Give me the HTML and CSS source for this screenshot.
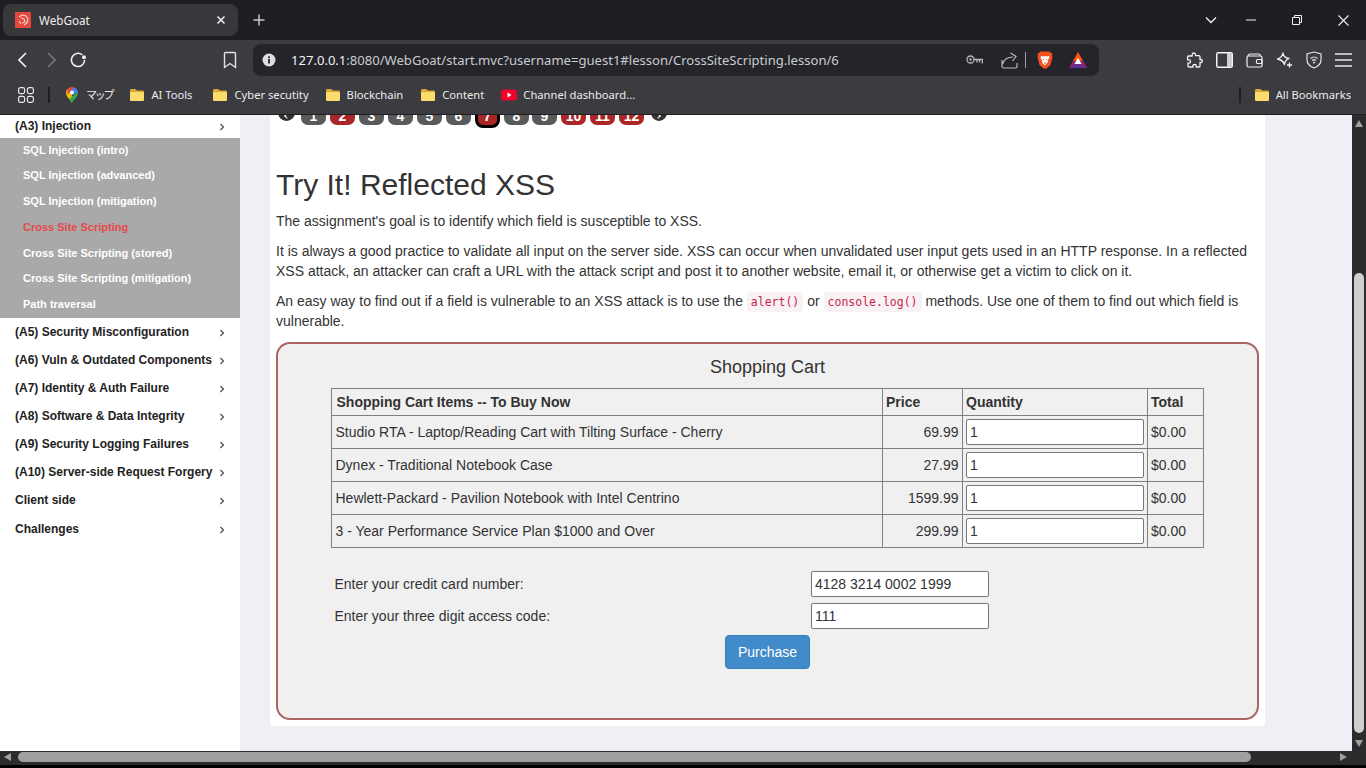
FILE: index.html
```html
<!DOCTYPE html>
<html lang="en">
<head>
<meta charset="utf-8">
<title>WebGoat</title>
<link rel="stylesheet" href="styles.css">
</head>
<body>
<svg class="defs" width="0" height="0" aria-hidden="true">
  <defs>
    <symbol id="folder" viewBox="0 0 16 16">
      <path d="M1 3.5C1 2.7 1.6 2 2.4 2h3.4c.4 0 .7.1 1 .4L8 3.5h5.6c.8 0 1.4.7 1.4 1.5v7.5c0 .8-.6 1.5-1.4 1.5H2.4C1.6 14 1 13.3 1 12.5z" fill="#d9a935"/>
      <path d="M1 6.2C1 5.5 1.6 5 2.4 5h11.2c.8 0 1.4.5 1.4 1.2v6.3c0 .8-.6 1.5-1.4 1.5H2.4C1.6 14 1 13.3 1 12.5z" fill="#fbdc6c"/>
    </symbol>
    <symbol id="chev" viewBox="0 0 6 8">
      <path d="M1.5 1l3 3-3 3" fill="none" stroke="#444" stroke-width="1.1"/>
    </symbol>
  </defs>
</svg>

<header class="tabbar">
  <div class="tab">
    <svg class="favicon" width="16" height="16" viewBox="0 0 16 16"><rect width="16" height="16" rx="1" fill="#e4483c"/><path d="M4 5l3-2 4 1 2 3-1 4-3 2M6 6l3 1 1 3-3 1M4 9l2 3" fill="none" stroke="#fbd5cf" stroke-width="1.1"/></svg>
    <span class="tab-title">WebGoat</span>
    <svg class="tab-close" width="10" height="10" viewBox="0 0 10 10"><path d="M1.5 1.5l7 7M8.5 1.5l-7 7" stroke="#f0f0f0" stroke-width="1.5"/></svg>
  </div>
  <svg class="new-tab" width="12" height="12" viewBox="0 0 12 12"><path d="M6 .5v11M.5 6h11" stroke="#c8c8cc" stroke-width="1.5"/></svg>
  <div class="window-controls">
    <svg width="12" height="8" viewBox="0 0 12 8"><path d="M1 1.5l5 5 5-5" fill="none" stroke="#f2f2f2" stroke-width="1.3"/></svg>
    <svg class="win-min" width="10" height="2" viewBox="0 0 10 2"><path d="M0 1h10" stroke="#f2f2f2"/></svg>
    <svg class="win-res" width="10" height="10" viewBox="0 0 10 10"><path d="M.5 2.5h7v7h-7zM2.5 2.5v-2h7v7h-2" fill="none" stroke="#f2f2f2"/></svg>
    <svg class="win-close" width="11" height="11" viewBox="0 0 11 11"><path d="M.5.5l10 10M10.5.5l-10 10" stroke="#f2f2f2" stroke-width="1.1"/></svg>
  </div>
</header>

<nav class="toolbar">
  <div class="nav-buttons">
    <svg width="12" height="18" viewBox="0 0 12 18"><path d="M10 2L3 9l7 7" fill="none" stroke="#f0f0f0" stroke-width="1.7"/></svg>
    <svg class="nav-fwd" width="12" height="18" viewBox="0 0 12 18"><path d="M2 2l7 7-7 7" fill="none" stroke="#77777b" stroke-width="1.7"/></svg>
    <svg class="nav-reload" width="18" height="18" viewBox="0 0 18 18"><path d="M15.6 9a6.6 6.6 0 1 1-2.2-5" fill="none" stroke="#f0f0f0" stroke-width="1.6"/><circle cx="15" cy="6.2" r="2" fill="#f0f0f0"/></svg>
  </div>
  <svg class="bookmark-btn" width="14" height="18" viewBox="0 0 14 18"><path d="M1.5 2.5c0-.6.4-1 1-1h9c.6 0 1 .4 1 1v14L7 12.5l-5.500 4z" fill="none" stroke="#e4e4e4" stroke-width="1.4"/></svg>
  <div class="address">
    <svg class="addr-info" width="14" height="14" viewBox="0 0 14 14"><circle cx="7" cy="7" r="6.500" fill="#dedee0"/><rect x="6.100" y="6" width="1.800" height="4.500" fill="#24242a"/><rect x="6.100" y="3.300" width="1.800" height="1.800" fill="#24242a"/></svg>
    <span class="url"><span class="url-host">127.0.0.1</span>:8080/WebGoat/start.mvc?username=guest1#lesson/CrossSiteScripting.lesson/6</span>
    <div class="addr-actions">
      <svg width="17" height="10" viewBox="0 0 17 10"><circle cx="4.500" cy="4.500" r="3.500" fill="none" stroke="#b8b8bc" stroke-width="1.300"/><circle cx="4.500" cy="4.500" r="1.200" fill="#b8b8bc"/><path d="M8 4.500h8.300v4M13.500 4.500v3M11 4.500v3" fill="none" stroke="#b8b8bc" stroke-width="1.300"/></svg>
      <svg class="act-share" width="17" height="17" viewBox="0 0 17 17"><path d="M1 8v6.500c0 .8.500 1.500 1.500 1.500h12c1 0 1.500-.7 1.500-1.500V11M1.500 12C3 7.500 6.500 5 12 5M9.500 1L15 4.500 11.500 9" fill="none" stroke="#b8b8bc" stroke-width="1.200"/></svg>
      <span class="act-sep"></span>
      <svg class="act-brave" width="16" height="18" viewBox="0 0 16 18"><path d="M3.500 0.500h9l1.500 1.500 1.500.5-.5 2 .5 1.500-2 8-4 3.500h-3l-4-3.500-2-8L1 4.500l-.5-2L2 2z" fill="#f1521f"/><path d="M4 5l2.500.5L8 5l1.500.5L12 5l.5 1.500-2 3 .5 1.500-1.500 1.500L8 14.500 6.500 13 5 11.500l.5-1.500-2-3z" fill="#fff"/><path d="M6 8l1 .7M10 8l-1 .7M7 12h2" stroke="#f1521f"/></svg>
      <svg class="act-bat" width="18" height="16" viewBox="0 0 18 16"><path d="M9 0l9 16H0z" fill="#662d91"/><path d="M9 0l5 9H4z" fill="#ff5000"/><path d="M0 16l4-7 2 3z" fill="#9e1f63"/><path d="M18 16l-4-7-2 3z" fill="#9e1f63"/><path d="M9 5.500l3.500 6.500h-7z" fill="#fff"/></svg>
    </div>
  </div>
  <div class="ext-icons">
    <svg width="17" height="17" viewBox="0 0 17 17"><path d="M6.500 1.500c1-1 3-.5 3 1.200v1h3.500c.6 0 1 .4 1 1v2.800h1c1.600 0 2 2.700 0 3h-1V14c0 .6-.4 1-1 1h-2.700v-1c0-2-3.400-2-3.400 0v1H3c-.6 0-1-.4-1-1v-2.800h1c2 0 2-3.400 0-3.400H1.600V5c0-.6.400-1 1-1h3.400z" fill="none" stroke="#f4f4f4" stroke-width="1.300"/></svg>
    <svg width="17" height="16" viewBox="0 0 17 16"><rect x=".75" y=".75" width="15.500" height="14.500" rx="1.500" fill="none" stroke="#f4f4f4" stroke-width="1.500"/><rect x="11" y="1" width="5" height="14" fill="#cfcfcf"/></svg>
    <svg width="17" height="15" viewBox="0 0 17 15"><path d="M2 3.500V3c0-1 1-2 2-2h9c1 0 1.500.7 1.500 2M1 4.500C1 3.500 1.700 3 2.500 3h12c1 0 1.500.7 1.500 1.500v8c0 1-.7 1.500-1.500 1.500h-12C1.700 14 1 13.500 1 12.500z" fill="none" stroke="#f4f4f4" stroke-width="1.200"/><rect x="10.500" y="6.500" width="5.500" height="4" rx="1" fill="none" stroke="#f4f4f4" stroke-width="1.200"/></svg>
    <svg width="17" height="17" viewBox="0 0 17 17"><path d="M7 1c.3 3.400 2 5 6 5.500-3 1.200-4.200 2.600-4.500 6-1-3-2.700-4.600-7-5.500C5 5.800 6.500 4.300 7 1z" fill="none" stroke="#f4f4f4" stroke-width="1.300" stroke-linejoin="round"/><path d="M13.500 10.500v5M11 13h5" stroke="#f4f4f4" stroke-width="1.300"/></svg>
    <svg width="16" height="18" viewBox="0 0 16 18"><path d="M8 1l7 2v6c0 4-3 6.500-7 8-4-1.500-7-4-7-8V3z" fill="none" stroke="#e4e4e4" stroke-width="1.200"/><path d="M4.500 7.500c2-1.800 5-1.800 7 0M6 9.500c1.200-1 2.800-1 4 0" fill="none" stroke="#e4e4e4" stroke-width="1.200"/><circle cx="8" cy="11.500" r="1" fill="#e4e4e4"/></svg>
    <svg width="17" height="14" viewBox="0 0 17 14"><path d="M0 1h17M0 7h17M0 13h17" stroke="#e8e8e8" stroke-width="1.500"/></svg>
  </div>
</nav>

<div class="bookmarks">
  <svg class="bm-grid" width="16" height="16" viewBox="0 0 16 16"><g fill="none" stroke="#e8e8e8" stroke-width="1.200"><rect x=".6" y=".6" width="6" height="6" rx="1.800"/><rect x="9.400" y=".6" width="6" height="6" rx="1.800"/><rect x=".6" y="9.400" width="6" height="6" rx="1.800"/><rect x="9.400" y="9.400" width="6" height="6" rx="1.800"/></g></svg>
  <span class="bm-sep"></span>
  <svg class="bm-maps" width="12" height="16" viewBox="0 0 12 16"><path d="M6 16C4.500 12.500 0 10 0 5.500 0 4 .6 3 1.500 2L6 8z" fill="#fbbc04"/><path d="M1.500 2C2.500.8 4 0 6 0c1 0 1.800.2 2.500.6L1.500 7.500z" fill="#ea4335"/><path d="M8.500.6c1.500.8 3 2.500 3.500 4.400L6 8 3 5z" fill="#4285f4"/><path d="M12 5.500C12 10 7.500 12.500 6 16L3.600 11.500 12 4.500z" fill="#34a853"/><circle cx="6" cy="5.500" r="2" fill="#fff"/></svg>
  <span class="bm-label bm-gap-maps">マップ</span>
  <span class="bm"><svg class="bm-folder" width="16" height="16"><use href="#folder"/></svg><span class="bm-label">AI Tools</span></span>
  <span class="bm bm-cyber"><svg class="bm-folder" width="16" height="16"><use href="#folder"/></svg><span class="bm-label">Cyber secutity</span></span>
  <span class="bm bm-chain"><svg class="bm-folder" width="16" height="16"><use href="#folder"/></svg><span class="bm-label">Blockchain</span></span>
  <span class="bm"><svg class="bm-folder" width="16" height="16"><use href="#folder"/></svg><span class="bm-label">Content</span></span>
  <span class="bm"><svg class="bm-yt" width="16" height="12" viewBox="0 0 16 12"><rect width="16" height="11" y=".5" rx="3" fill="#f4002c"/><path d="M6.500 3.500v5l4-2.500z" fill="#fff"/></svg><span class="bm-label">Channel dashboard...</span></span>
  <span class="bm-right">
    <span class="bm-sep"></span>
    <span class="bm bm-all"><svg class="bm-folder" width="16" height="16"><use href="#folder"/></svg><span class="bm-label">All Bookmarks</span></span>
  </span>
</div>

<div class="viewport">
  <div class="page-row">
    <div class="page">
      <aside class="sidebar">
        <a class="menu-item menu-first">(A3) Injection<svg class="chev" width="6" height="8"><use href="#chev"/></svg></a>
        <div class="submenu">
          <a class="sub-item">SQL Injection (intro)</a>
          <a class="sub-item sub-tight">SQL Injection (advanced)</a>
          <a class="sub-item">SQL Injection (mitigation)</a>
          <a class="sub-item sub-active">Cross Site Scripting</a>
          <a class="sub-item">Cross Site Scripting (stored)</a>
          <a class="sub-item">Cross Site Scripting (mitigation)</a>
          <a class="sub-item">Path traversal</a>
        </div>
        <a class="menu-item">(A5) Security Misconfiguration<svg class="chev" width="6" height="8"><use href="#chev"/></svg></a>
        <a class="menu-item">(A6) Vuln &amp; Outdated Components<svg class="chev" width="6" height="8"><use href="#chev"/></svg></a>
        <a class="menu-item">(A7) Identity &amp; Auth Failure<svg class="chev" width="6" height="8"><use href="#chev"/></svg></a>
        <a class="menu-item">(A8) Software &amp; Data Integrity<svg class="chev" width="6" height="8"><use href="#chev"/></svg></a>
        <a class="menu-item">(A9) Security Logging Failures<svg class="chev" width="6" height="8"><use href="#chev"/></svg></a>
        <a class="menu-item">(A10) Server-side Request Forgery<svg class="chev" width="6" height="8"><use href="#chev"/></svg></a>
        <a class="menu-item">Client side<svg class="chev" width="6" height="8"><use href="#chev"/></svg></a>
        <a class="menu-item">Challenges<svg class="chev" width="6" height="8"><use href="#chev"/></svg></a>
      </aside>
      <main class="content">
        <div class="card">
          <div class="pager">
            <span class="pg-arrow"></span>
            <span class="pg">1</span><span class="pg pg-red">2</span><span class="pg">3</span><span class="pg">4</span><span class="pg">5</span><span class="pg">6</span><span class="pg pg-red pg-sel">7</span><span class="pg">8</span><span class="pg">9</span><span class="pg pg-red">10</span><span class="pg pg-red">11</span><span class="pg pg-red">12</span>
            <span class="pg-arrow pg-next"></span>
          </div>
          <h2 class="title">Try It! Reflected XSS</h2>
          <p>The assignment's goal is to identify which field is susceptible to XSS.</p>
          <p>It is always a good practice to validate all input on the server side. XSS can occur when unvalidated user input gets used in an HTTP response. In a reflected XSS attack, an attacker can craft a URL with the attack script and post it to another website, email it, or otherwise get a victim to click on it.</p>
          <p>An easy way to find out if a field is vulnerable to an XSS attack is to use the <code>alert()</code> or <code>console.log()</code> methods. Use one of them to find out which field is vulnerable.</p>
          <section class="attack">
            <div class="cart-title">Shopping Cart</div>
            <table class="cart">
              <colgroup><col class="c1"><col class="c2"><col class="c3"><col class="c4"></colgroup>
              <thead>
                <tr><th>Shopping Cart Items -- To Buy Now</th><th>Price</th><th>Quantity</th><th>Total</th></tr>
              </thead>
              <tbody>
                <tr><td>Studio RTA - Laptop/Reading Cart with Tilting Surface - Cherry</td><td class="num">69.99</td><td class="qty"><input value="1"></td><td class="total">$0.00</td></tr>
                <tr><td>Dynex - Traditional Notebook Case</td><td class="num">27.99</td><td class="qty"><input value="1"></td><td class="total">$0.00</td></tr>
                <tr><td>Hewlett-Packard - Pavilion Notebook with Intel Centrino</td><td class="num">1599.99</td><td class="qty"><input value="1"></td><td class="total">$0.00</td></tr>
                <tr><td>3 - Year Performance Service Plan $1000 and Over</td><td class="num">299.99</td><td class="qty"><input value="1"></td><td class="total">$0.00</td></tr>
              </tbody>
            </table>
            <div class="pay">
              <label>Enter your credit card number:</label><input value="4128 3214 0002 1999">
              <label>Enter your three digit access code:</label><input value="111">
            </div>
            <div class="actions"><button class="purchase">Purchase</button></div>
            <hr class="rule">
          </section>
        </div>
      </main>
    </div>
    <div class="vscroll">
      <span class="arrow-up"></span>
      <span class="vthumb"></span>
      <span class="arrow-down"></span>
    </div>
  </div>
  <div class="hscroll">
    <span class="arrow-left"></span>
    <span class="hthumb"></span>
    <span class="arrow-right"></span>
  </div>
</div>
</body>
</html>
```
FILE: styles.css
```css
* { box-sizing: border-box; }
html, body { margin: 0; padding: 0; }
body {
  width: 1366px;
  height: 768px;
  overflow: hidden;
  display: flex;
  flex-direction: column;
  background: #000;
  font-family: "Liberation Sans", Arial, sans-serif;
  color: #333;
}
.defs { position: absolute; }
svg { display: block; flex: none; }

/* Browser chrome */
.tabbar {
  height: 40px;
  flex: none;
  display: flex;
  align-items: center;
  background: #1f1f23;
  padding-left: 3px;
}
.tab {
  width: 235px;
  height: 32px;
  display: flex;
  align-items: center;
  background: #37373c;
  border-radius: 8px;
  padding: 0 12px;
}
.tab-title {
  margin-left: 8px;
  flex: 1;
  color: #eeeeee;
  font: 11.7px "Noto Sans", "Open Sans", sans-serif;
}
.new-tab { margin-left: 15px; }
.window-controls { margin-left: auto; display: flex; align-items: center; padding-right: 17px; }
.win-min { margin-left: 29px; }
.win-res { margin-left: 36px; }
.win-close { margin-left: 36px; }

.toolbar {
  height: 40px;
  flex: none;
  display: flex;
  align-items: center;
  background: #3b3b40;
}
.nav-buttons { display: flex; align-items: center; padding-left: 16px; width: 223px; }
.nav-fwd { margin-left: 18px; }
.nav-reload { margin-left: 11px; }
.bookmark-btn { margin-right: 16px; }
.address {
  width: 846px;
  height: 32px;
  display: flex;
  align-items: center;
  background: #24242a;
  border-radius: 8px;
  padding-left: 9px;
}
.url {
  margin-left: 15px;
  color: #c8ccd0;
  font: 13.07px "Noto Sans", "Open Sans", sans-serif;
  white-space: nowrap;
}
.url-host { color: #f0f0f0; }
.addr-actions { margin-left: auto; display: flex; align-items: center; padding-right: 12px; }
.act-share { margin-left: 18px; }
.act-sep { width: 1px; height: 16px; margin-left: 7px; background: #a0a0a4; }
.act-brave { margin-left: 11px; }
.act-bat { margin-left: 16px; }
.ext-icons { display: flex; align-items: center; gap: 13px; margin-left: 87px; }

.bookmarks {
  height: 35px;
  flex: none;
  display: flex;
  align-items: center;
  background: #3b3b40;
  border-bottom: 1px solid #1f1f23;
  padding: 0 15px 4px 18px;
  font: 11.2px "Noto Sans", "Open Sans", "Noto Sans CJK JP", sans-serif;
}
.bm-sep { width: 2px; height: 16px; background: #1f1f23; margin-left: 14px; }
.bm-maps { margin-left: 16px; }
.bm-label { color: #ececec; white-space: nowrap; margin-bottom: 2px; }
.bm-gap-maps { margin-left: 8px; font-family: "Noto Sans CJK JP", sans-serif; font-size: 11px; letter-spacing: -2.2px; }
.bm { display: flex; align-items: center; margin-left: 17px; }
.bm-cyber { margin-left: 20px; }
.bm-chain { margin-left: 16px; }
.bm-folder, .bm-yt { margin-right: 6px; }
.bm-right { margin-left: auto; display: flex; align-items: center; }
.bm-right .bm-sep { margin: 0; }
.bm-all { margin-left: 13px; }

/* Page viewport */
.viewport { flex: 1; min-height: 0; display: flex; flex-direction: column; }
.page-row { flex: 1; min-height: 0; display: flex; }
.page {
  flex: 1;
  min-width: 0;
  display: flex;
  overflow: hidden;
  background: #eff0f6;
}
.sidebar { width: 240px; flex: none; background: #fff; }
.menu-item {
  height: 28px;
  display: flex;
  align-items: center;
  justify-content: space-between;
  padding: 0 15px 0 15px;
  font-size: 12px;
  font-weight: 700;
  color: #222;
}
.menu-item:last-child { height: 30px; }
.menu-first { height: 23px; padding-bottom: 2px; }
.chev { margin-top: 2px; }
.submenu { height: 180px; background: #a9a9a9; }
.sub-item {
  height: 25.7px;
  display: flex;
  align-items: center;
  padding: 0 0 2px 23px;
  font-size: 11px;
  font-weight: 700;
  color: #fff;
}
.sub-tight { padding-bottom: 4px; }
.sub-active { color: #e8484a; }

.content { flex: 1; min-width: 0; padding-left: 30px; }
.card {
  width: 995px;
  margin-top: -28px;
  padding: 20px 6px 6px;
  background: #fff;
  border-radius: 4px;
}
.pager { display: flex; align-items: flex-start; gap: 4px; height: 18px; padding-left: 2px; }
.pg {
  width: 25px;
  height: 18px;
  flex: none;
  border-radius: 0 0 7px 7px;
  background: #5a5a5a;
  color: #fff;
  font-size: 14px;
  font-weight: 700;
  line-height: 18px;
  text-align: center;
}
.pg-red { background: #ab2626; }
.pg-sel {
  height: 24px;
  margin-top: -3px;
  border: 3px solid #000;
  border-radius: 0 0 8px 8px;
  line-height: 18px;
}
.pg-sel + .pg + .pg { margin-left: -1px; }
.pg-arrow {
  width: 17px;
  height: 17px;
  margin: -3px 2px 0 0;
  flex: none;
  border-radius: 50%;
  background: #333;
  position: relative;
}
.pg-arrow::after {
  content: "";
  position: absolute;
  left: 7px;
  top: 10px;
  width: 3px;
  height: 3px;
  border-left: 1.5px solid #fff;
  border-bottom: 1.5px solid #fff;
  transform: rotate(45deg);
}
.pg-next { margin: -3px 0 0 3px; width: 16px; }
.pg-next::after { transform: rotate(-135deg); left: 5px; }
.title {
  margin: 43px 0 10px;
  font-size: 30px;
  font-weight: 400;
  line-height: 33px;
  color: #333;
}
p { margin: 0 0 10px; font-size: 14px; line-height: 20px; color: #333; }
code {
  padding: 3px 4px;
  border-radius: 4px;
  background: #f9f2f4;
  color: #c7254e;
  font: 11.5px/1 "DejaVu Sans Mono", "Liberation Mono", monospace;
}
.attack {
  height: 378px;
  margin-top: 11px;
  padding-top: 13px;
  border: 2px solid #a96464;
  border-radius: 14px;
  background: #f0f0f0;
}
.cart-title { font-size: 18px; line-height: 20px; text-align: center; color: #333; }
.cart {
  width: 872px;
  margin: 11px 0 0 53px;
  table-layout: fixed;
  border-collapse: collapse;
  font-size: 14px;
}
.c1 { width: 551px; }
.c2 { width: 80px; }
.c3 { width: 185px; }
.c4 { width: 56px; }
.cart th, .cart td { border: 1px solid #808080; padding: 0 3px; color: #333; }
.cart th { height: 27px; text-align: left; font-weight: 700; }
.cart th:first-child { padding-left: 4.5px; }
.cart td { height: 33px; }
.cart td:first-child { padding-left: 3.5px; }
.cart .num { text-align: right; padding-right: 3.5px; }
.cart .total { padding-left: 3px; }
.cart input { display: block; width: 100%; }
input {
  height: 26px;
  padding: 0 3px;
  border: 1px solid #767676;
  border-radius: 2px;
  background: #fff;
  color: #333;
  font: 14px "Liberation Sans", Arial, sans-serif;
}
.pay {
  width: 873px;
  margin: 23px 0 0 53px;
  display: grid;
  grid-template-columns: 480px 178px;
  row-gap: 6px;
  align-items: center;
  font-size: 14px;
}
.pay label { padding-left: 3.5px; }
.actions { display: flex; justify-content: center; margin-top: 6px; }
.purchase {
  width: 85px;
  height: 34px;
  padding: 0;
  border: 1px solid #357ebd;
  border-radius: 4px;
  background: #428bca;
  color: #fff;
  font: 14px "Liberation Sans", Arial, sans-serif;
}
.rule { width: 873px; margin: 23px 0 0 53px; border: 0; border-top: 1px solid #eeeeee; }

/* Scrollbars */
.vscroll {
  width: 14px;
  flex: none;
  display: flex;
  flex-direction: column;
  align-items: center;
  background: #2c2c2c;
}
.arrow-up {
  margin-top: 5px;
  border: 4.5px solid transparent;
  border-top: 0;
  border-bottom: 7px solid #a0a0a0;
}
.vthumb { width: 10px; height: 460px; margin-top: 146px; border-radius: 5px; background: #d0d0d0; }
.arrow-down {
  margin-top: 7px;
  border: 4.5px solid transparent;
  border-bottom: 0;
  border-top: 7px solid #a0a0a0;
}
.hscroll {
  height: 17px;
  flex: none;
  display: flex;
  align-items: center;
  padding: 0 19px 3px 4px;
  background: #2c2c2c;
  border-bottom: 3px solid #000;
}
.arrow-left { border: 4.5px solid transparent; border-left: 0; border-right: 7px solid #a0a0a0; }
.hthumb { width: 1233px; height: 10px; margin-left: 7px; border-radius: 5px; background: #a0a0a0; }
.arrow-right { margin-left: auto; border: 4.5px solid transparent; border-right: 0; border-left: 7px solid #a0a0a0; }
```
